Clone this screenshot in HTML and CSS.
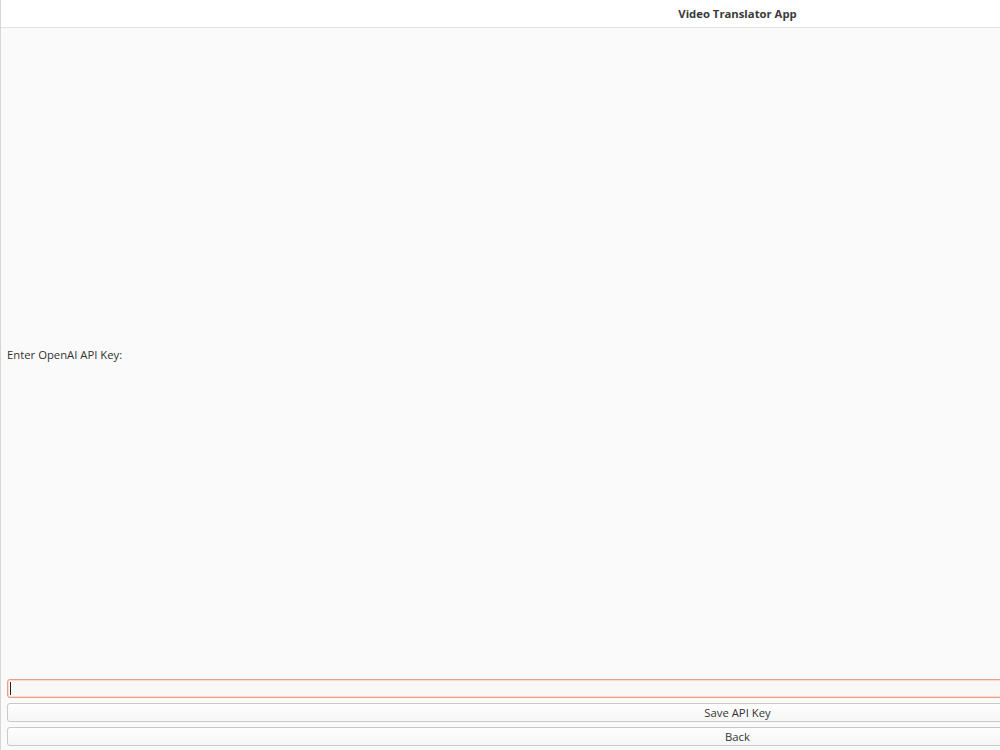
FILE: index.html
```html
<!DOCTYPE html>
<html lang="en">
<head>
  <meta charset="UTF-8" />
  <title>Video Translator App</title>
  <link rel="stylesheet" href="styles.css">
</head>
<body>

  <div class="window">
    <div class="titlebar">Video Translator App</div>

    <div class="content">
      <div class="prompt">Enter OpenAI API Key:</div>
      <div class="entry"><span class="caret"></span></div>
      <button class="btn">Save API Key</button>
      <button class="btn">Back</button>
    </div>
  </div>

</body>
</html>
```

FILE: styles.css
```css
body {
  margin: 0;
  overflow: hidden;
  background-color: #fafafa;
  font-family: "Open Sans", "DejaVu Sans", sans-serif;
  font-size: 11.3px;
  color: #333333;
}

/* the window is wider than the screen, so its right side is cut off */
.window {
  width: 1474px;
  height: 750px;
  display: flex;
  flex-direction: column;
  border-left: 1px solid #d6d6d6;
  box-sizing: border-box;
}

.titlebar {
  height: 27px;
  line-height: 27px;
  background-color: #ffffff;
  border-bottom: 1px solid #e2e2e2;
  text-align: center;
  font-weight: 700;
  color: #3a3a3a;
}

.content {
  flex: 1;
  display: flex;
  flex-direction: column;
  padding: 0 6px 4px 6px;
}

.prompt {
  flex: 1;
  display: flex;
  align-items: center;
  padding-top: 2px;
}

.entry {
  height: 19px;
  box-sizing: border-box;
  border: 1px solid #e99d80;
  border-radius: 3px;
  background-color: #faf8f7;
  box-shadow: inset 0 0 0 1px #f6ddd3;
  display: flex;
  align-items: center;
  padding-left: 2px;
  margin-bottom: 5px;
}

.caret {
  width: 1px;
  height: 13px;
  background-color: #222222;
}

.btn {
  height: 19px;
  box-sizing: border-box;
  border: 1px solid #c9c9c9;
  border-radius: 3px;
  background: linear-gradient(#fefefe, #f6f6f6);
  font-family: inherit;
  font-size: 11.3px;
  color: #333333;
  padding: 0;
  line-height: 17px;
  margin-bottom: 5px;
}

.btn:last-child {
  margin-bottom: 0;
}
```
